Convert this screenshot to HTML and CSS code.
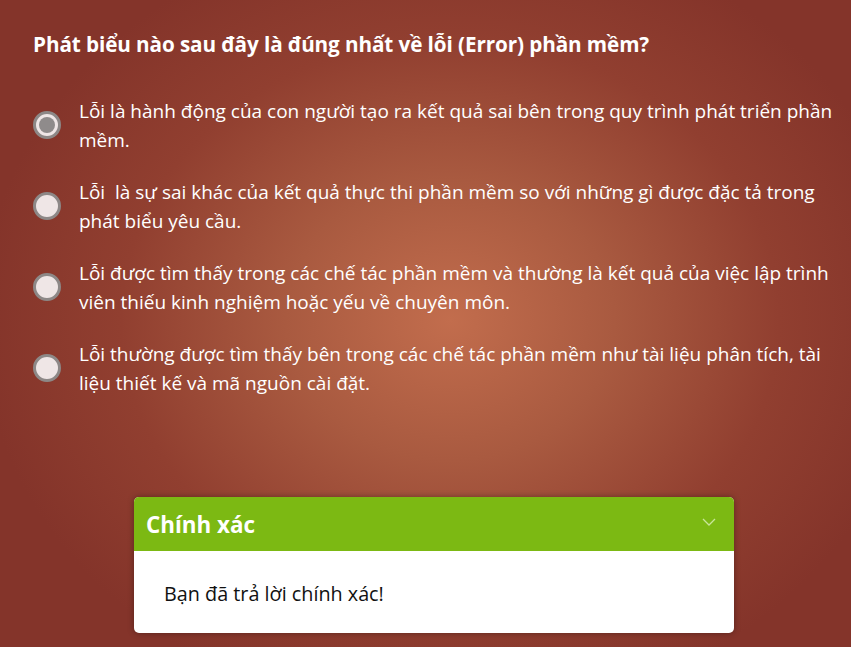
FILE: index.html
```html
<!DOCTYPE html>
<html lang="vi">
<head>
<meta charset="utf-8">
<link rel="stylesheet" href="styles.css">
</head>
<body>
<div class="slide">
  <h1 class="question">Phát biểu nào sau đây là đúng nhất về lỗi (Error) phần mềm?</h1>
  <ul class="options">
    <li class="option selected"><span class="radio"></span><span class="label">Lỗi là hành động của con người tạo ra kết quả sai bên trong quy trình phát triển phần mềm.</span></li>
    <li class="option"><span class="radio"></span><span class="label">Lỗi&nbsp; là sự sai khác của kết quả thực thi phần mềm so với những gì được đặc tả trong phát biểu yêu cầu.</span></li>
    <li class="option"><span class="radio"></span><span class="label">Lỗi được tìm thấy trong các chế tác phần mềm và thường là kết quả của việc lập trình viên thiếu kinh nghiệm hoặc yếu về chuyên môn.</span></li>
    <li class="option"><span class="radio"></span><span class="label">Lỗi thường được tìm thấy bên trong các chế tác phần mềm như tài liệu phân tích, tài liệu thiết kế và mã nguồn cài đặt.</span></li>
  </ul>
  <div class="feedback">
    <div class="fb-head">
      <span class="fb-title">Chính xác</span>
      <svg class="chev" width="14" height="8" viewBox="0 0 14 8"><path d="M1 1 L7 7 L13 1" fill="none" stroke="#c9e59a" stroke-width="1.3"/></svg>
    </div>
    <div class="fb-body">Bạn đã trả lời chính xác!</div>
  </div>
</div>
</body>
</html>
```

FILE: styles.css
```css
html, body { margin: 0; padding: 0; }
body {
  width: 851px;
  height: 647px;
  overflow: hidden;
  font-family: "Open Sans", "Noto Sans", sans-serif;
}
.slide {
  width: 851px;
  height: 647px;
  box-sizing: border-box;
  padding: 30px 0 0 33px;
  background: radial-gradient(ellipse 470px 400px at 450px 320px, #c26d4d 0%, #a95a40 35%, #913f30 70%, #84342a 100%);
  color: #fff;
}
.question {
  margin: 0;
  font-size: 20.7px;
  font-weight: 700;
  letter-spacing: -0.1px;
  line-height: 28px;
}
.options {
  list-style: none;
  margin: 39px 0 0 0;
  padding: 0;
  width: 810px;
}
.option {
  display: flex;
  align-items: flex-start;
  margin-bottom: 23px;
}
.radio {
  flex: none;
  width: 22px;
  height: 22px;
  border: 3px solid #8d8887;
  border-radius: 50%;
  background: #efe6e6;
  margin-top: 14px;
  margin-right: 18px;
  box-sizing: content-box;
  position: relative;
}
.selected .radio::after {
  content: "";
  position: absolute;
  left: 3px; top: 3px;
  width: 16px; height: 16px;
  border-radius: 50%;
  background: #8f8b8b;
}
.label {
  font-size: 19px;
  line-height: 29px;
}
.feedback {
  width: 600px;
  margin: 99px 0 0 101px;
  border-radius: 5px;
  overflow: hidden;
  box-shadow: 0 0 6px rgba(0,0,0,0.35);
  background: #fff;
}
.fb-head {
  height: 54px;
  background: #7cb913;
  display: flex;
  align-items: center;
  justify-content: space-between;
  padding: 0 18px 0 12px;
}
.fb-title {
  font-size: 22.4px;
  font-weight: 700;
  color: #fff;
}
.chev { margin-top: -4px; }
.fb-body {
  height: 82px;
  box-sizing: border-box;
  padding: 29px 0 0 30px;
  color: #111;
  font-size: 19.8px;
  line-height: 28px;
}
```
